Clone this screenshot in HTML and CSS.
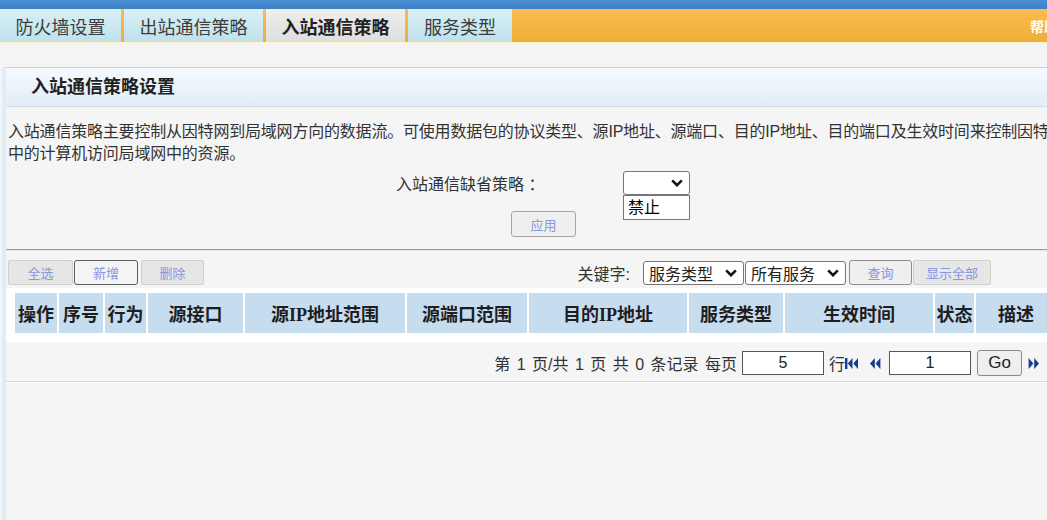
FILE: index.html
```html
<!DOCTYPE html>
<html lang="zh-CN">
<head>
    <meta charset="UTF-8">
    <title>入站通信策略</title>
    <link rel="stylesheet" href="styles.css">
</head>
<body>
<div class="page">
    <div class="topbar"></div>

    <div class="tabs">
        <a class="tab tab-1">防火墙设置</a>
        <a class="tab tab-2">出站通信策略</a>
        <a class="tab tab-2 active">入站通信策略</a>
        <a class="tab tab-4">服务类型</a>
        <span class="help">帮助</span>
    </div>
    <div class="subbar"></div>

    <div class="panel">
        <div class="panel-head">入站通信策略设置</div>

        <div class="desc">入站通信策略主要控制从因特网到局域网方向的数据流。可使用数据包的协议类型、源IP地址、源端口、目的IP地址、目的端口及生效时间来控制因特网<br>中的计算机访问局域网中的资源。</div>

        <div class="policy-row">
            <span class="policy-label">入站通信缺省策略 ：</span>
            <span class="select-wrap">
                <span class="select select-blank">
                    <svg class="chev" width="12" height="8" viewBox="0 0 12 8"><path d="M1.2 1.4 L6 6.2 L10.8 1.4" /></svg>
                </span>
                <!-- open option list -->
                <span class="dropdown">禁止</span>
            </span>
        </div>

        <div class="apply-row">
            <button class="btn btn-apply">应用</button>
        </div>

        <div class="divider"></div>

        <div class="toolbar">
            <button class="btn btn-tool btn-all">全选</button>
            <button class="btn btn-tool btn-add">新增</button>
            <button class="btn btn-tool btn-del">删除</button>

            <div class="search">
                <span class="search-label">关键字:</span>
                <span class="select select-kw">服务类型
                    <svg class="chev" width="12" height="8" viewBox="0 0 12 8"><path d="M1.2 1.4 L6 6.2 L10.8 1.4" /></svg>
                </span>
                <span class="select select-kw">所有服务
                    <svg class="chev" width="12" height="8" viewBox="0 0 12 8"><path d="M1.2 1.4 L6 6.2 L10.8 1.4" /></svg>
                </span>
                <button class="btn btn-tool btn-query">查询</button>
                <button class="btn btn-tool btn-showall">显示全部</button>
            </div>
        </div>

        <div class="table-wrap">
            <table class="rules">
                <colgroup>
                    <col style="width:42px">
                    <col style="width:44px">
                    <col style="width:41px">
                    <col style="width:95px">
                    <col style="width:160px">
                    <col style="width:120px">
                    <col style="width:158px">
                    <col style="width:94px">
                    <col style="width:148px">
                    <col style="width:39px">
                    <col style="width:80px">
                </colgroup>
                <tr>
                    <th>操作</th>
                    <th>序号</th>
                    <th>行为</th>
                    <th>源接口</th>
                    <th>源IP地址范围</th>
                    <th>源端口范围</th>
                    <th>目的IP地址</th>
                    <th>服务类型</th>
                    <th>生效时间</th>
                    <th>状态</th>
                    <th>描述</th>
                </tr>
            </table>
        </div>

        <div class="pager">
            <span class="pager-text">第 1 页/共 1 页 共 0 条记录 每页</span>
            <input class="pager-input per-page" value="5">
            <span class="pager-row">行</span>
            <svg class="pg-icon first" width="14" height="11" viewBox="0 0 14 11"><rect x="0" y="0" width="2.4" height="11"/><path d="M7.5 0 L2.8 5.5 L7.5 11Z M13 0 L8.3 5.5 L13 11Z"/></svg>
            <svg class="pg-icon prev" width="12" height="11" viewBox="0 0 12 11"><path d="M5.8 0 L1 5.5 L5.8 11Z M11.4 0 L6.6 5.5 L11.4 11Z"/></svg>
            <input class="pager-input page-no" value="1">
            <button class="go-btn">Go</button>
            <svg class="pg-icon next" width="12" height="11" viewBox="0 0 12 11"><path d="M0.6 0 L5.4 5.5 L0.6 11Z M6.2 0 L11 5.5 L6.2 11Z"/></svg>
        </div>

        <div class="divider light"></div>
    </div>
</div>
</body>
</html>
```

FILE: styles.css
```css
body {
    margin: 0;
    background: #f5f5f5;
    overflow: hidden;
    font-family: "Liberation Sans", "Noto Sans CJK SC", sans-serif;
    color: #333;
}
.page {
    width: 1080px;
}

/* top bars */
.topbar {
    height: 9px;
    background: linear-gradient(#4b90d1, #3b81c3);
}
.tabs {
    display: flex;
    gap: 3px;
    height: 33px;
    background: linear-gradient(#fbbc50, #eeae38);
}
.tab {
    display: flex;
    align-items: center;
    justify-content: center;
    font-size: 18px;
    color: #3d3d3d;
    background: linear-gradient(#d9f0f6, #bfe1eb);
    cursor: pointer;
}
.tab-1 { width: 121px; }
.tab-2 { width: 139px; }
.tab-4 { width: 104px; }
.tab.active {
    background: linear-gradient(#eeeeee, #dedede);
    color: #222;
    font-weight: bold;
}
.help {
    margin-left: auto;
    margin-right: 22px;
    align-self: center;
    color: #fff;
    font-size: 14px;
    font-weight: bold;
}
.subbar {
    height: 24px;
    background: #f4f4f4;
    border-top: 1px solid #fff3c6;
}

/* panel */
.panel {
    min-height: 453px;
    margin-left: 2px;
    border-left: 4px solid #deedf7;
}
.panel-head {
    height: 38px;
    line-height: 38px;
    padding-left: 25px;
    border-top: 1px solid #d0d0d0;
    border-bottom: 1px solid #cfdded;
    background: linear-gradient(#f4faff, #e2edf7);
    font-size: 18px;
    font-weight: bold;
    color: #222;
}
.desc {
    margin-top: 14px;
    padding-left: 2px;
    font-size: 16px;
    line-height: 22px;
    letter-spacing: -0.2px;
    white-space: nowrap;
    color: #333;
}
.policy-row {
    display: flex;
    align-items: center;
    height: 24px;
    margin-top: 6px;
    padding-left: 390px;
    font-size: 16px;
}
.policy-label {
    width: 227px;
}
.select-wrap {
    position: relative;
}
.select {
    display: flex;
    align-items: center;
    justify-content: space-between;
    box-sizing: border-box;
    height: 24px;
    padding: 0 6px;
    border: 1px solid #767676;
    border-radius: 3px;
    background: #fff;
    font-size: 16px;
    color: #222;
}
.select-blank {
    width: 67px;
    justify-content: flex-end;
}
.chev path {
    fill: none;
    stroke: #111;
    stroke-width: 2.6;
}
.dropdown {
    position: absolute;
    left: 0;
    top: 24px;
    box-sizing: border-box;
    width: 67px;
    height: 25px;
    padding-left: 4px;
    line-height: 23px;
    border: 1px solid #767676;
    background: #fff;
    font-size: 16px;
    color: #000;
}

/* buttons */
.btn {
    box-sizing: border-box;
    height: 26px;
    padding: 0;
    border: 1px solid #a5a5a5;
    border-radius: 3px;
    background: #efefef;
    color: #8797e0;
    font-family: inherit;
    font-size: 13px;
}
.apply-row {
    margin-top: 16px;
    padding-left: 505px;
}
.btn-apply { width: 65px; }

.divider {
    margin-top: 12px;
    border-top: 1px solid #9c9c9c;
    border-bottom: 1px solid #e3e3e3;
}
.divider.light {
    margin-top: 5px;
    border-top: 1px solid #d6d6d6;
    border-bottom: 1px solid #fff;
}

/* toolbar */
.toolbar {
    display: flex;
    align-items: center;
    height: 25px;
    margin-top: 9px;
    padding-left: 2px;
    padding-right: 89px;
}
.btn-tool {
    height: 25px;
    border-color: #cfcfcf;
    border-radius: 2px;
    background: #e6e6e6;
}
.btn-all { width: 65px; }
.btn-add {
    width: 64px;
    margin-left: 1px;
    border-color: #5c5c5c;
    border-radius: 3px;
    background: #f4f4f4;
}
.btn-del {
    width: 63px;
    margin-left: 3px;
}
.search {
    display: flex;
    align-items: center;
    margin-left: auto;
}
.search-label {
    margin-right: 13px;
    font-size: 16px;
    color: #333;
}
.select-kw {
    width: 101px;
    height: 24px;
    padding: 0 6px 0 5px;
}
.select-kw + .select-kw {
    margin-left: 1px;
}
.btn-query {
    width: 63px;
    margin-left: 3px;
    border-color: #8d8d8d;
    border-radius: 3px;
    background: #efefef;
}
.btn-showall {
    width: 78px;
    margin-left: 1px;
}

/* table */
.table-wrap {
    margin-top: 3px;
    padding: 3px 0 7px 7px;
    background: #fff;
}
.rules {
    table-layout: fixed;
    border-spacing: 2px;
    width: 1045px;
}
.rules th {
    height: 40px;
    padding: 0;
    background: #c6dcef;
    font-family: "Liberation Serif", "Noto Sans CJK SC", serif;
    font-size: 18px;
    font-weight: bold;
    color: #1e1e1e;
    text-align: center;
    white-space: nowrap;
}

/* pager */
.pager {
    display: flex;
    justify-content: flex-end;
    align-items: center;
    height: 26px;
    margin-top: 8px;
    padding-right: 40px;
    font-size: 16px;
    color: #333;
}
.pager-text {
    word-spacing: 2px;
}
.pager-input {
    box-sizing: border-box;
    width: 82px;
    height: 24px;
    margin-left: 5px;
    border: 1px solid #555;
    background: #fff;
    font-family: "Liberation Sans", sans-serif;
    font-size: 16px;
    text-align: center;
    color: #222;
}
.pager-row {
    margin-left: 5px;
}
.pg-icon {
    fill: #173b8f;
}
.pg-icon.prev { margin-left: 10px; }
.page-no { margin-left: 8px; }
.go-btn {
    box-sizing: border-box;
    width: 45px;
    height: 26px;
    margin-left: 6px;
    border: 1px solid #8a8a8a;
    border-radius: 3px;
    background: #efefef;
    font-family: "Liberation Sans", sans-serif;
    font-size: 17px;
    color: #222;
}
.pg-icon.next { margin-left: 6px; }
```
